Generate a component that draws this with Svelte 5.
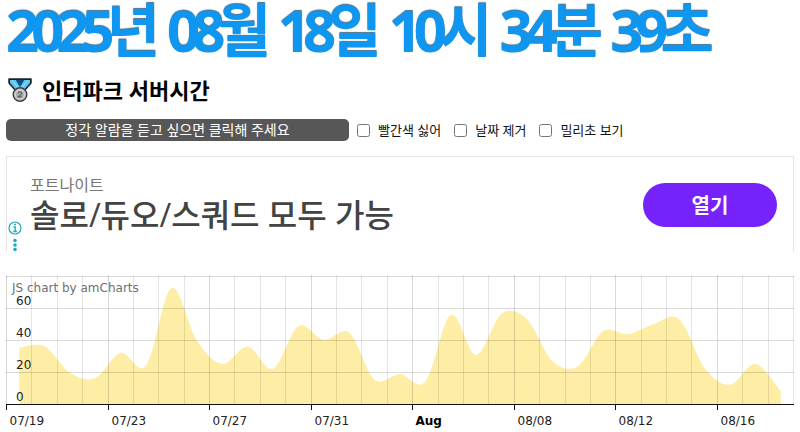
<script>
  const values = [
    35, 36, 19.5, 16.2, 32, 24, 72.5, 39.5, 25, 36, 22, 48.7, 40, 44.6, 15.2, 18.7,
    14, 55.8, 30.7, 56.4, 53, 27, 23.5, 45.5, 43.7, 50, 53, 22.5, 12, 25, 8
  ];
  const dates = ['07/19', '07/23', '07/27', '07/31', 'Aug', '08/08', '08/12', '08/16'];
  const levels = [0, 20, 40, 60];
  const clock = ['2025년', '08월', '18일', '10시', '34분', '39초'];
  const options = [
    { id: 'no-red', label: '빨간색 싫어' },
    { id: 'no-date', label: '날짜 제거' },
    { id: 'millis', label: '밀리초 보기' }
  ];
  const plotHeight = 129;

  let width = $state(788);
  let checked = $state({});

  const step = $derived((width - 1) / values.length);
  const lineX = (i) => Math.round(i * step) + 0.5;
  const valueY = (v) => plotHeight - (v / 80) * (plotHeight - 1);

  // Smooth curve through the centre of each day's column.
  const area = $derived.by(() => {
    const pts = values.map((v, i) => [(i + 0.5) * step + 0.5, valueY(v)]);
    const last = pts.length - 1;
    let d = `M${pts[0][0]} ${plotHeight}L${pts[0][0]} ${pts[0][1]}`;
    for (let i = 0; i < last; i++) {
      const a = pts[Math.max(0, i - 1)];
      const b = pts[i];
      const c = pts[i + 1];
      const e = pts[Math.min(last, i + 2)];
      d += `C${b[0] + (c[0] - a[0]) / 6} ${b[1] + (c[1] - a[1]) / 6} ${c[0] - (e[0] - b[0]) / 6} ${c[1] - (e[1] - b[1]) / 6} ${c[0]} ${c[1]}`;
    }
    return `${d}L${pts[last][0]} ${plotHeight}Z`;
  });
</script>

<main>
  <h1>
    {#each clock as part}
      <span>{part}</span>{' '}
    {/each}
  </h1>

  <h2>
    <svg class="medal" viewBox="0 0 24 24" aria-hidden="true">
      <path d="M1 1h22v4l-7 8H8L1 5z" fill="#102b40" stroke="#17232c" stroke-width="1.5" stroke-linejoin="round" />
      <path d="M2 2h6l5 8-4 3-7-8z" fill="#59c5ee" />
      <path d="M22 2h-6l-5 8 4 3 7-8z" fill="#59c5ee" />
      <path d="M8 2h8l-4 7z" fill="#124c84" />
      <path d="M4 2l7 9M20 2l-7 9" stroke="#a8e4f7" stroke-width="1" />
      <circle cx="12" cy="16.5" r="6.8" fill="#bfc1c3" stroke="#3e4042" stroke-width="1.4" />
      <circle cx="12" cy="16.5" r="4.5" fill="#a9abad" stroke="#dadcdd" stroke-width="1" />
      <path d="M10.2 15.3c.2-2 3.6-1.8 3.4.2-.1 1.2-2 2-3.4 3.3h3.6" fill="none" stroke="#606264" stroke-width="1.2" />
    </svg>
    인터파크 서버시간
  </h2>

  <div class="controls">
    <button type="button" class="alarm">정각 알람을 듣고 싶으면 클릭해 주세요</button>
    {#each options as option}
      <div class="option">
        <input type="checkbox" id={option.id} bind:checked={checked[option.id]} />
        <label for={option.id}>{option.label}</label>
      </div>
    {/each}
  </div>

  <section class="ad">
    <div class="marks">
      <svg width="14" height="14" viewBox="0 0 14 14" aria-hidden="true">
        <circle cx="7" cy="7" r="6" fill="none" stroke="#1cabb9" stroke-width="1.2" />
        <path d="M5.5 6h1.7v4.5M5.3 10.5h3.7" fill="none" stroke="#1cabb9" stroke-width="1.3" />
        <circle cx="7" cy="3.6" r="1" fill="#1cabb9" />
      </svg>
      <svg width="14" height="14" viewBox="0 0 14 14" fill="#1cabb9" aria-hidden="true">
        <circle cx="7" cy="2.5" r="1.8" /><circle cx="7" cy="7" r="1.8" /><circle cx="7" cy="11.5" r="1.8" />
      </svg>
    </div>
    <div class="copy">
      <p class="brand">포트나이트</p>
      <p class="headline">솔로/듀오/스쿼드 모두 가능</p>
    </div>
    <button type="button" class="open">열기</button>
  </section>

  <div class="chart" bind:clientWidth={width}>
    <svg {width} height="156" role="img" aria-label="JS chart by amCharts">
      <path d={area} fill="#feeda5" />
      <g class="grid">
        {#each { length: values.length + 1 } as _, i}
          <line x1={lineX(i)} x2={lineX(i)} y1="0" y2={plotHeight} class:major={i % 4 === 0} />
        {/each}
        {#each [20, 40, 60, 80] as v}
          <line x1="0" x2={width} y1={Math.floor(valueY(v)) + 0.5} y2={Math.floor(valueY(v)) + 0.5} class="major" />
        {/each}
      </g>
      <line class="axis" x1="0" x2={width} y1={plotHeight + 0.5} y2={plotHeight + 0.5} />
      {#each dates as date, i}
        <line class="axis" x1={lineX(i * 4)} x2={lineX(i * 4)} y1={plotHeight} y2={plotHeight + 6} />
        <text x={lineX(i * 4) + 3} y="150" class:month={date === 'Aug'}>{date}</text>
      {/each}
      {#each levels as v}
        <text x="10" y={Math.round(valueY(v)) - 3}>{v}</text>
      {/each}
      <text class="credit" x="6" y="17">JS chart by amCharts</text>
    </svg>
  </div>
</main>

<style>
  :global(body) {
    margin: 0;
    background: #fff;
  }
  main {
    padding: 0 6px;
    font-family: "Open Sans", "Noto Sans CJK KR", sans-serif;
    color: #111;
  }
  h1 {
    margin: 0;
    font-size: 58px;
    line-height: 60px;
    font-weight: 700;
    letter-spacing: -8px;
    white-space: nowrap;
    color: #0e96f0;
    text-shadow: 0 -1px 1px #47718e;
  }
  h1 span {
    margin-right: 8px;
  }
  h2 {
    display: flex;
    align-items: center;
    gap: 10px;
    margin: 15px 2px 14px;
    font-size: 22px;
    line-height: 30px;
    font-weight: 700;
    color: #000;
  }
  .medal {
    width: 24px;
    height: 24px;
  }
  button {
    border: 0;
    font-family: inherit;
    color: #fff;
    cursor: pointer;
  }
  .controls {
    display: flex;
    align-items: center;
    gap: 13px;
    font-size: 13px;
  }
  .alarm {
    width: 343px;
    height: 22px;
    margin-right: -5px;
    padding: 0;
    border-radius: 5px;
    background: #575757;
    font-size: 14px;
    line-height: 22px;
  }
  .option {
    display: flex;
    align-items: center;
    gap: 8px;
    line-height: 20px;
  }
  input {
    width: 13px;
    height: 13px;
    margin: 0;
  }
  .ad {
    display: flex;
    align-items: center;
    height: 96px;
    margin-top: 15px;
    border: 1px solid #e6e6e6;
    border-bottom: 0;
    box-sizing: border-box;
  }
  .marks {
    display: flex;
    flex-direction: column;
    align-self: flex-end;
    gap: 3px;
    width: 23px;
    padding-left: 1px;
    box-sizing: border-box;
  }
  .copy {
    flex: 1;
  }
  p {
    margin: 0;
  }
  .brand {
    font-size: 16px;
    line-height: 20px;
    color: #777;
  }
  .headline {
    font-size: 32px;
    line-height: 40px;
    font-weight: 500;
    color: #434343;
  }
  .open {
    width: 134px;
    height: 44px;
    margin-right: 16px;
    border-radius: 22px;
    background: #7622fb;
    font-size: 20px;
    font-weight: 700;
  }
  .chart {
    margin-top: 23px;
  }
  .chart svg {
    display: block;
  }
  text {
    font-family: "DejaVu Sans", sans-serif;
    font-size: 12px;
    fill: #222;
  }
  .month {
    font-weight: 700;
    fill: #000;
  }
  .credit {
    fill: #707070;
  }
  .grid line {
    stroke: #000;
    stroke-opacity: 0.1;
  }
  .grid .major {
    stroke-opacity: 0.15;
  }
  .axis {
    stroke: #111;
  }
</style>
